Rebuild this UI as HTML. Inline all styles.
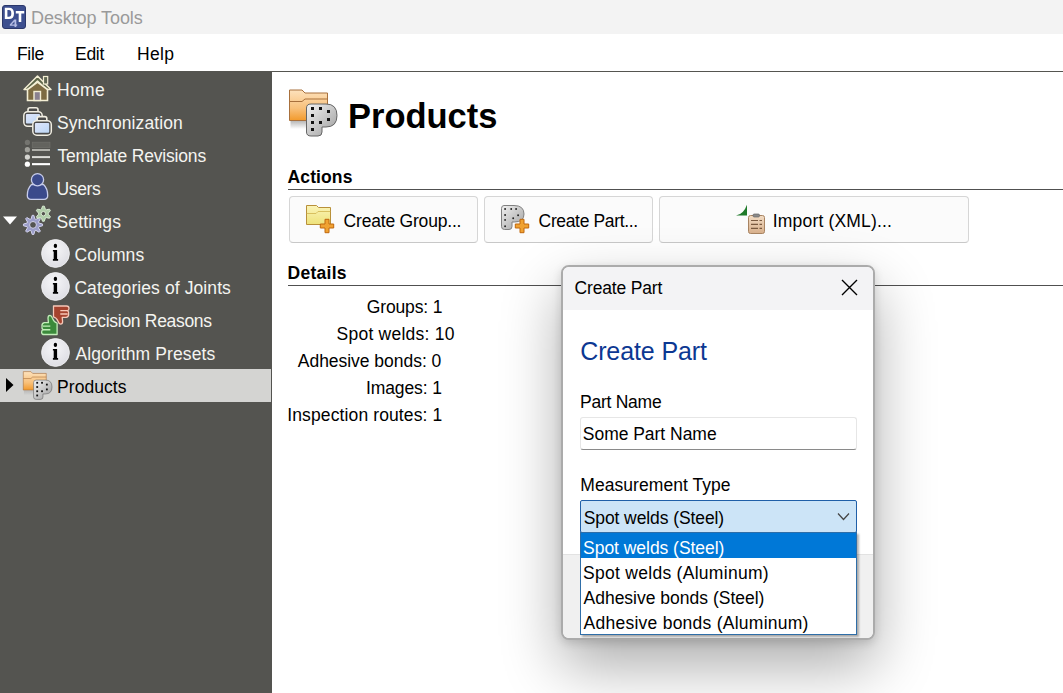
<!DOCTYPE html>
<html><head><meta charset="utf-8"><style>
html,body{margin:0;padding:0;}
body{width:1063px;height:693px;position:relative;overflow:hidden;background:#fff;font-family:"Liberation Sans",sans-serif;color:#000;}
.t{position:absolute;line-height:0;white-space:nowrap;}
.bar{position:absolute;box-sizing:content-box;}
svg{overflow:visible}
</style></head><body>
<div class="bar" style="left:0;top:0;width:1063px;height:34px;background:#f3f3f3"></div>
<svg style="position:absolute;left:0;top:0" width="30" height="32"><rect x="2.5" y="5.5" width="23" height="23" rx="2.5" fill="#3d4f8f" stroke="#2b376a" stroke-width="1"/><path fill-rule="evenodd" fill="#fff" d="M4.8 7.8 H9 Q14 7.8 14 13.4 Q14 19 9 19 H4.8 Z M7.4 10.1 V16.7 H8.9 Q11.3 16.7 11.3 13.4 Q11.3 10.1 8.9 10.1 Z"/><path fill="#fff" d="M15.8 11 H24.2 V13.4 H21.3 V22 H18.7 V13.4 H15.8 Z"/><path fill="#b4bce4" d="M14.3 19.5 H16.3 V24.4 H17.2 V25.8 H16.3 V27 H14.5 V25.8 H9.8 V24.5 Z M14.5 21.6 L11.6 24.4 H14.5 Z" fill-rule="evenodd"/></svg>
<div class="t" style="left:31.0px;top:17.76px;font-size:18px;letter-spacing:-0.083px;color:#9a9a9a;">Desktop Tools</div>
<div class="bar" style="left:0;top:34px;width:1063px;height:37px;background:#fff"></div>
<div class="t" style="left:17.0px;top:53.74px;font-size:17.5px;letter-spacing:-0.35px;">File</div>
<div class="t" style="left:75.0px;top:53.74px;font-size:17.5px;letter-spacing:-0.267px;">Edit</div>
<div class="t" style="left:137.0px;top:53.74px;font-size:17.5px;letter-spacing:0.333px;">Help</div>
<div class="bar" style="left:0;top:71px;width:1063px;height:1px;background:#555550"></div>
<div class="bar" style="left:0;top:71px;width:272px;height:622px;background:#545450"></div>
<div class="bar" style="left:0;top:369px;width:271px;height:33px;background:#d4d4d2"></div>
<div class="t" style="left:57.0px;top:90.14px;font-size:17.5px;letter-spacing:0.35px;color:#f4f4f0;">Home</div>
<svg style="position:absolute;left:23px;top:74px" width="29" height="28" viewBox="0 0 29 28"><path d="M1 15.5 L14.5 2 L28 15.5 L23.5 15.5 L14.5 7 L5.5 15.5 Z" fill="#5f6749" stroke="#f3eed4" stroke-width="1.5" stroke-linejoin="round"/>
<rect x="20.5" y="2.5" width="4.2" height="7.5" fill="#5f6651" stroke="#f3eed4" stroke-width="1.2"/>
<path d="M4.5 15.5 L14.5 8 L24.5 15.5 L24.5 26.5 L4.5 26.5 Z" fill="#7d6b42" stroke="#f3eed4" stroke-width="1.6"/>
<rect x="11" y="17.5" width="6.5" height="9" fill="#8a8190" stroke="#f3eed4" stroke-width="1.4"/></svg>
<div class="t" style="left:57.0px;top:123.14px;font-size:17.5px;letter-spacing:0.086px;color:#f4f4f0;">Synchronization</div>
<svg style="position:absolute;left:23px;top:107px" width="30" height="30" viewBox="0 0 30 30"><defs><linearGradient id="sb" x1="0" y1="0" x2="1" y2="1"><stop offset="0" stop-color="#dfe6fb"/><stop offset="1" stop-color="#bcd6f4"/></linearGradient></defs>
<path d="M5 4.7 V2.8 Q5 0.8 7 0.8 H13 Q15 0.8 15 2.8 V4.7" fill="#4a4a4a" stroke="#f1eee2" stroke-width="1.6"/>
<rect x="0.8" y="4.7" width="18.4" height="14.6" rx="4" fill="#4b4b4b" stroke="#f1eee2" stroke-width="1.5"/>
<rect x="2.9" y="7" width="14.1" height="9.6" rx="1" fill="url(#sb)"/>
<path d="M14.2 13.7 V11.6 Q14.2 9.6 16.2 9.6 H21.8 Q23.8 9.6 23.8 11.6 V13.7" fill="#4a4a4a" stroke="#f1eee2" stroke-width="1.6"/>
<rect x="9.8" y="13.7" width="18.5" height="14.5" rx="4" fill="#4b4b4b" stroke="#f1eee2" stroke-width="1.5"/>
<rect x="11.9" y="16" width="14.3" height="9.8" rx="1" fill="url(#sb)"/></svg>
<div class="t" style="left:57.4px;top:156.14px;font-size:17.5px;letter-spacing:-0.176px;color:#f4f4f0;">Template Revisions</div>
<svg style="position:absolute;left:23px;top:139px" width="28" height="28" viewBox="0 0 28 28"><circle cx="4.4" cy="3.4" r="2.6" fill="#74746f"/><rect x="9.3" y="3.2" width="17.6" height="5.2" fill="#63635e" stroke="#6e6e69" stroke-width="0.8"/>
<circle cx="4.4" cy="10.7" r="2.6" fill="#a0a09a"/><rect x="9" y="10" width="18" height="2" fill="#b0b0aa"/>
<circle cx="4.4" cy="18.1" r="2.6" fill="#d4d4d0"/><rect x="9" y="17.1" width="18" height="2" fill="#dcdcd8"/>
<circle cx="4.4" cy="25.2" r="2.6" fill="#fff"/><rect x="9" y="24.1" width="18" height="2.1" fill="#fff"/></svg>
<div class="t" style="left:56.5px;top:189.14px;font-size:17.5px;letter-spacing:-0.35px;color:#f4f4f0;">Users</div>
<svg style="position:absolute;left:23px;top:172px" width="29" height="29" viewBox="0 0 29 29"><path d="M8.5 12.5 Q4.3 16.5 4.3 23.5 Q4.3 27.3 8 27.3 H21 Q24.7 27.3 24.7 23.5 Q24.7 16.5 20.5 12.5 Z" fill="#3b4a8b" stroke="#c8cdea" stroke-width="1.3"/>
<circle cx="14.5" cy="7.7" r="6.1" fill="#3b4a8b" stroke="#c8cdea" stroke-width="1.3"/></svg>
<div class="t" style="left:56.5px;top:222.14px;font-size:17.5px;letter-spacing:0.186px;color:#f4f4f0;">Settings</div>
<svg style="position:absolute;left:23px;top:205px" width="30" height="30" viewBox="0 0 30 30"><path d="M9.15 10.34 L10.85 10.34 L11.86 13.98 L12.87 14.40 L16.16 12.54 L17.36 13.74 L15.50 17.03 L15.92 18.04 L19.56 19.05 L19.56 20.75 L15.92 21.76 L15.50 22.77 L17.36 26.06 L16.16 27.26 L12.87 25.40 L11.86 25.82 L10.85 29.46 L9.15 29.46 L8.14 25.82 L7.13 25.40 L3.84 27.26 L2.64 26.06 L4.50 22.77 L4.08 21.76 L0.44 20.75 L0.44 19.05 L4.08 18.04 L4.50 17.03 L2.64 13.74 L3.84 12.54 L7.13 14.40 L8.14 13.98 Z" fill="#9c9ec9" stroke="#d4d4ee" stroke-width="1"/><circle cx="10" cy="19.9" r="3.4" fill="#545450" stroke="#d4d4ee" stroke-width="1"/><path d="M19.51 1.15 L21.29 1.15 L22.33 4.20 L23.33 4.77 L26.49 4.15 L27.38 5.70 L25.27 8.12 L25.27 9.28 L27.38 11.70 L26.49 13.25 L23.33 12.63 L22.33 13.20 L21.29 16.25 L19.51 16.25 L18.47 13.20 L17.47 12.63 L14.31 13.25 L13.42 11.70 L15.53 9.28 L15.53 8.12 L13.42 5.70 L14.31 4.15 L17.47 4.77 L18.47 4.20 Z" fill="#b0ceaa" stroke="#d8ead2" stroke-width="1"/><circle cx="20.4" cy="8.7" r="2.2" fill="#545450" stroke="#d8ead2" stroke-width="1"/></svg>
<div class="t" style="left:74.4px;top:255.14px;font-size:17.5px;letter-spacing:0.133px;color:#f4f4f0;">Columns</div>
<svg style="position:absolute;left:41px;top:239px" width="29" height="29" viewBox="0 0 29 29"><defs><radialGradient id="ig" cx="0.45" cy="0.35" r="0.7"><stop offset="0" stop-color="#f6f6f8"/><stop offset="1" stop-color="#dcdce2"/></radialGradient></defs>
<circle cx="14.5" cy="14.5" r="13.9" fill="url(#ig)" stroke="#f2f2f4" stroke-width="0.9"/>
<ellipse cx="14.4" cy="6.9" rx="1.7" ry="2.1" fill="#000"/>
<path d="M11.9 11 H16.1 V19.9 H17.1 V21.7 H11.9 V19.9 H12.7 V12.6 H11.9 Z" fill="#000"/></svg>
<div class="t" style="left:74.4px;top:288.14px;font-size:17.5px;letter-spacing:0.095px;color:#f4f4f0;">Categories of Joints</div>
<svg style="position:absolute;left:41px;top:272px" width="29" height="29" viewBox="0 0 29 29"><defs><radialGradient id="ig" cx="0.45" cy="0.35" r="0.7"><stop offset="0" stop-color="#f6f6f8"/><stop offset="1" stop-color="#dcdce2"/></radialGradient></defs>
<circle cx="14.5" cy="14.5" r="13.9" fill="url(#ig)" stroke="#f2f2f4" stroke-width="0.9"/>
<ellipse cx="14.4" cy="6.9" rx="1.7" ry="2.1" fill="#000"/>
<path d="M11.9 11 H16.1 V19.9 H17.1 V21.7 H11.9 V19.9 H12.7 V12.6 H11.9 Z" fill="#000"/></svg>
<div class="t" style="left:75.6px;top:321.14px;font-size:17.5px;letter-spacing:-0.307px;color:#f4f4f0;">Decision Reasons</div>
<svg style="position:absolute;left:38px;top:303px" width="32" height="32" viewBox="0 0 32 32"><g>
<path d="M15.5 3 H28.5 Q31 3 31 5.3 Q31 7.2 29.6 7.7 Q31 8.6 30.6 10.8 Q31 13.6 28.3 14.3 H24.2 L24.6 18.6 Q24.6 21.2 22.6 21.2 Q21 21 20 18.2 Q18.6 14.6 15.5 13.8 Z" fill="#a5432e" stroke="#f6c8b8" stroke-width="1.3" stroke-linejoin="round"/>
<path d="M22.3 7.6 H29.6 M22.3 11 H29.6" stroke="#f6c8b8" stroke-width="1.3"/>
</g>
<g transform="rotate(180 17.3 17.1)">
<path d="M15.5 3 H28.5 Q31 3 31 5.3 Q31 7.2 29.6 7.7 Q31 8.6 30.6 10.8 Q31 13.6 28.3 14.3 H24.2 L24.6 18.6 Q24.6 21.2 22.6 21.2 Q21 21 20 18.2 Q18.6 14.6 15.5 13.8 Z" fill="#3b8a3b" stroke="#c2eeb9" stroke-width="1.3" stroke-linejoin="round" transform="translate(0 -0.5) scale(1 1.05)"/>
<path d="M22.3 7.6 H29.6 M22.3 11 H29.6" stroke="#c2eeb9" stroke-width="1.3" transform="translate(0 -0.5) scale(1 1.05)"/>
</g></svg>
<div class="t" style="left:75.4px;top:354.14px;font-size:17.5px;letter-spacing:0.106px;color:#f4f4f0;">Algorithm Presets</div>
<svg style="position:absolute;left:41px;top:338px" width="29" height="29" viewBox="0 0 29 29"><defs><radialGradient id="ig" cx="0.45" cy="0.35" r="0.7"><stop offset="0" stop-color="#f6f6f8"/><stop offset="1" stop-color="#dcdce2"/></radialGradient></defs>
<circle cx="14.5" cy="14.5" r="13.9" fill="url(#ig)" stroke="#f2f2f4" stroke-width="0.9"/>
<ellipse cx="14.4" cy="6.9" rx="1.7" ry="2.1" fill="#000"/>
<path d="M11.9 11 H16.1 V19.9 H17.1 V21.7 H11.9 V19.9 H12.7 V12.6 H11.9 Z" fill="#000"/></svg>
<div class="t" style="left:57.0px;top:387.14px;font-size:17.5px;letter-spacing:0.071px;">Products</div>
<svg style="position:absolute;left:23px;top:371px" width="29" height="29" viewBox="0 0 29 29"><g transform="scale(0.6041666666666666)"><defs>
<linearGradient id="pf60" x1="0" y1="0" x2="0" y2="1"><stop offset="0" stop-color="#fde2bd"/><stop offset="0.6" stop-color="#f8c07a"/><stop offset="1" stop-color="#f29a2c"/></linearGradient>
<linearGradient id="pp60" x1="0" y1="0" x2="1" y2="1"><stop offset="0" stop-color="#f4f4f4"/><stop offset="0.5" stop-color="#c8c8c8"/><stop offset="1" stop-color="#9a9a9a"/></linearGradient></defs>
<linearGradient id="sh60" x1="0" y1="0" x2="0" y2="1"><stop offset="0" stop-color="#b8b8b8"/><stop offset="1" stop-color="#b8b8b8" stop-opacity="0"/></linearGradient><rect x="1.5" y="32" width="22" height="8" fill="url(#sh60)"/>
<path d="M0.5 1 H13 L16 4 H38.5 V31.5 H0.5 Z" fill="url(#pf60)" stroke="#a8703c" stroke-width="1"/>
<path d="M0.5 12.5 H13 L16 10 H38.5" fill="none" stroke="#a8703c" stroke-width="1"/>
<path d="M22 15 H37 Q48 15 48 26.5 Q48 38 37 38 H33 V43 Q33 47 29 47 H22 Q17.5 47 17.5 43 V19 Q17.5 15 22 15 Z" fill="url(#pp60)" stroke="#666" stroke-width="1"/>
<g fill="#111"><rect x="22" y="18" width="3" height="3"/><rect x="30" y="18" width="3" height="3"/><rect x="38" y="21" width="3" height="3"/>
<rect x="22" y="25" width="3" height="3"/><rect x="38" y="29" width="3" height="3"/><rect x="22" y="32" width="3" height="3"/><rect x="30" y="32" width="3" height="3"/><rect x="22" y="39" width="3" height="3"/></g></g></svg>
<svg style="position:absolute;left:2px;top:216px" width="16" height="9"><path d="M1 0.5 H15 L8 8.5 Z" fill="#fff"/></svg>
<svg style="position:absolute;left:5px;top:377px" width="10" height="16"><path d="M1 1 L8.5 8 L1 15 Z" fill="#000"/></svg>
<svg style="position:absolute;left:289px;top:89px" width="49" height="48" viewBox="0 0 49 48"><g transform="scale(1)"><defs>
<linearGradient id="pf100" x1="0" y1="0" x2="0" y2="1"><stop offset="0" stop-color="#fde2bd"/><stop offset="0.6" stop-color="#f8c07a"/><stop offset="1" stop-color="#f29a2c"/></linearGradient>
<linearGradient id="pp100" x1="0" y1="0" x2="1" y2="1"><stop offset="0" stop-color="#f4f4f4"/><stop offset="0.5" stop-color="#c8c8c8"/><stop offset="1" stop-color="#9a9a9a"/></linearGradient></defs>
<linearGradient id="sh100" x1="0" y1="0" x2="0" y2="1"><stop offset="0" stop-color="#b8b8b8"/><stop offset="1" stop-color="#b8b8b8" stop-opacity="0"/></linearGradient><rect x="1.5" y="32" width="22" height="8" fill="url(#sh100)"/>
<path d="M0.5 1 H13 L16 4 H38.5 V31.5 H0.5 Z" fill="url(#pf100)" stroke="#a8703c" stroke-width="1"/>
<path d="M0.5 12.5 H13 L16 10 H38.5" fill="none" stroke="#a8703c" stroke-width="1"/>
<path d="M22 15 H37 Q48 15 48 26.5 Q48 38 37 38 H33 V43 Q33 47 29 47 H22 Q17.5 47 17.5 43 V19 Q17.5 15 22 15 Z" fill="url(#pp100)" stroke="#666" stroke-width="1"/>
<g fill="#111"><rect x="22" y="18" width="3" height="3"/><rect x="30" y="18" width="3" height="3"/><rect x="38" y="21" width="3" height="3"/>
<rect x="22" y="25" width="3" height="3"/><rect x="38" y="29" width="3" height="3"/><rect x="22" y="32" width="3" height="3"/><rect x="30" y="32" width="3" height="3"/><rect x="22" y="39" width="3" height="3"/></g></g></svg>
<div class="t" style="left:348.0px;top:116.05px;font-size:34.5px;font-weight:700;letter-spacing:-0.014px;">Products</div>
<div class="t" style="left:287.6px;top:176.64px;font-size:17.5px;font-weight:700;letter-spacing:0.1px;">Actions</div>
<div class="bar" style="left:288px;top:189px;width:775px;height:1px;background:#505050"></div>
<div class="bar" style="left:289px;top:196px;width:187px;height:45px;background:#fbfbfb;border:1px solid #d6d6d6;border-bottom-color:#c8c8c8;border-radius:4px"></div>
<div class="bar" style="left:484px;top:196px;width:167px;height:45px;background:#fbfbfb;border:1px solid #d6d6d6;border-bottom-color:#c8c8c8;border-radius:4px"></div>
<div class="bar" style="left:659px;top:196px;width:308px;height:45px;background:#fbfbfb;border:1px solid #d6d6d6;border-bottom-color:#c8c8c8;border-radius:4px"></div>
<div class="t" style="left:343.6px;top:221.24px;font-size:17.5px;letter-spacing:-0.2px;">Create Group...</div>
<div class="t" style="left:538.6px;top:221.24px;font-size:17.5px;letter-spacing:-0.35px;">Create Part...</div>
<div class="t" style="left:772.8px;top:221.24px;font-size:17.5px;letter-spacing:0.171px;">Import (XML)...</div>
<svg style="position:absolute;left:306px;top:205px" width="28" height="28" viewBox="0 0 28 28"><defs><linearGradient id="fy" x1="0" y1="0" x2="0" y2="1"><stop offset="0" stop-color="#fbf4b8"/><stop offset="1" stop-color="#eee27a"/></linearGradient></defs>
<path d="M0.5 0.5 H10.5 L12.5 2.5 H24.5 V19.5 H0.5 Z" fill="url(#fy)" stroke="#b8903a" stroke-width="1"/>
<path d="M0.8 8.5 H10 L12 6.5 H24.2" fill="none" stroke="#d8c060" stroke-width="1"/>
<path d="M19 14.3 H23 V19 H27.7 V23 H23 V27.7 H19 V23 H14.3 V19 H19 Z" fill="#f0a232" stroke="#c0680e" stroke-width="1"/></svg>
<svg style="position:absolute;left:501px;top:205px" width="28" height="28" viewBox="0 0 28 28"><defs><linearGradient id="bp" x1="0" y1="0" x2="1" y2="1"><stop offset="0" stop-color="#f2f2f2"/><stop offset="0.5" stop-color="#c8c8c8"/><stop offset="1" stop-color="#a0a0a0"/></linearGradient></defs>
<path d="M3 0.5 H13 Q23 0.5 23 9 Q23 17 13.5 17 H11 V21.5 Q11 24.5 8 24.5 H3.5 Q0.5 24.5 0.5 21.5 V3.5 Q0.5 0.5 3 0.5 Z" fill="url(#bp)" stroke="#808080" stroke-width="1"/>
<g fill="#222"><circle cx="4.1" cy="4" r="0.95"/><circle cx="10.2" cy="4" r="0.95"/><circle cx="15.1" cy="4" r="0.95"/><circle cx="4.1" cy="10" r="0.95"/><circle cx="17.1" cy="10.3" r="0.95"/><circle cx="12.2" cy="13.2" r="0.95"/><circle cx="4.1" cy="14.9" r="0.95"/><circle cx="4.1" cy="21.3" r="0.95"/></g>
<path d="M19 14.3 H23 V19 H27.7 V23 H23 V27.7 H19 V23 H14.3 V19 H19 Z" fill="#f0a232" stroke="#c0680e" stroke-width="1"/></svg>
<svg style="position:absolute;left:736px;top:204px" width="30" height="30" viewBox="0 0 30 30"><defs><linearGradient id="cb" x1="0" y1="0" x2="0" y2="1"><stop offset="0" stop-color="#f2dcc4"/><stop offset="1" stop-color="#d8b08c"/></linearGradient></defs>
<path d="M0 11.5 Q7.5 10.5 11 0.8 V11.5 Z" fill="#1f7a2a"/>
<rect x="12.5" y="11.5" width="16" height="18" rx="2" fill="url(#cb)" stroke="#a88462" stroke-width="1"/>
<rect x="17" y="10" width="6.5" height="3" rx="1.2" fill="#8a8a8a" stroke="#666" stroke-width="0.7"/>
<path d="M15 16.5 H22 M15 20.4 H22 M15 24.4 H22 M23.5 16.5 H26 M23.5 20.4 H26 M23.5 24.4 H26" stroke="#7a5a40" stroke-width="1.1"/></svg>
<div class="t" style="left:287.5px;top:272.84px;font-size:17.5px;font-weight:700;letter-spacing:0.267px;">Details</div>
<div class="bar" style="left:288px;top:285px;width:775px;height:1px;background:#505050"></div>
<div class="t" style="left:366.7px;top:306.74px;font-size:17.5px;letter-spacing:-0.125px;">Groups: 1</div>
<div class="t" style="left:336.6px;top:333.74px;font-size:17.5px;letter-spacing:0.231px;">Spot welds: 10</div>
<div class="t" style="left:297.8px;top:360.84px;font-size:17.5px;letter-spacing:-0.031px;">Adhesive bonds: 0</div>
<div class="t" style="left:366.0px;top:387.84px;font-size:17.5px;letter-spacing:-0.113px;">Images: 1</div>
<div class="t" style="left:287.3px;top:414.74px;font-size:17.5px;letter-spacing:0.116px;">Inspection routes: 1</div>
<div class="bar" style="left:561px;top:265px;width:310px;height:371px;border:2px solid #ababab;border-radius:8px;background:#fff;box-shadow:0 26px 60px rgba(0,0,0,0.33), 0 3px 10px rgba(0,0,0,0.14);overflow:hidden"><div class="bar" style="left:0;top:0;width:310px;height:43px;background:#f3f3f5"></div><div class="bar" style="left:0;top:287px;width:310px;height:84px;background:#f0f0f0;border-top:1px solid #e2e2e2"></div></div>
<div class="t" style="left:574.6px;top:287.94px;font-size:17.5px;letter-spacing:-0.18px;">Create Part</div>
<svg style="position:absolute;left:841px;top:279px" width="17" height="17"><path d="M1 1 L16 16 M16 1 L1 16" stroke="#000" stroke-width="1.4"/></svg>
<div class="t" style="left:580.2px;top:351.14px;font-size:25px;letter-spacing:-0.11px;color:#0c3892;">Create Part</div>
<div class="t" style="left:580.0px;top:401.94px;font-size:17.5px;letter-spacing:-0.25px;">Part Name</div>
<div class="bar" style="left:580px;top:417px;width:275px;height:31px;background:#fff;border:1px solid #e6e6e6;border-bottom:1px solid #8a8a8a;border-radius:3px"></div>
<div class="t" style="left:582.8px;top:433.74px;font-size:17.5px;letter-spacing:-0.031px;">Some Part Name</div>
<div class="t" style="left:580.3px;top:484.94px;font-size:17.5px;letter-spacing:0.053px;">Measurement Type</div>
<div class="bar" style="left:580px;top:500px;width:275px;height:31px;background:#cce4f7;border:1px solid #1f5fa8;border-radius:2px"></div>
<div class="t" style="left:583.7px;top:517.94px;font-size:17.5px;letter-spacing:-0.088px;">Spot welds (Steel)</div>
<svg style="position:absolute;left:837px;top:512px" width="13" height="10"><path d="M1 1.5 L6.5 7.5 L12 1.5" fill="none" stroke="#444" stroke-width="1.2"/></svg>
<div class="bar" style="left:580px;top:532px;width:275px;height:101px;background:#fff;border:1px solid #2f6ea8;box-shadow:2px 2px 2px rgba(0,0,0,0.3)"></div>
<div class="bar" style="left:581px;top:533px;width:275px;height:25px;background:#0078d7"></div>
<div class="t" style="left:583.1px;top:547.74px;font-size:17.5px;letter-spacing:-0.041px;color:#fff;">Spot welds (Steel)</div>
<div class="t" style="left:583.0px;top:572.74px;font-size:17.5px;letter-spacing:0.285px;">Spot welds (Aluminum)</div>
<div class="t" style="left:583.5px;top:597.74px;font-size:17.5px;">Adhesive bonds (Steel)</div>
<div class="t" style="left:583.5px;top:622.74px;font-size:17.5px;letter-spacing:0.254px;">Adhesive bonds (Aluminum)</div>
</body></html>
